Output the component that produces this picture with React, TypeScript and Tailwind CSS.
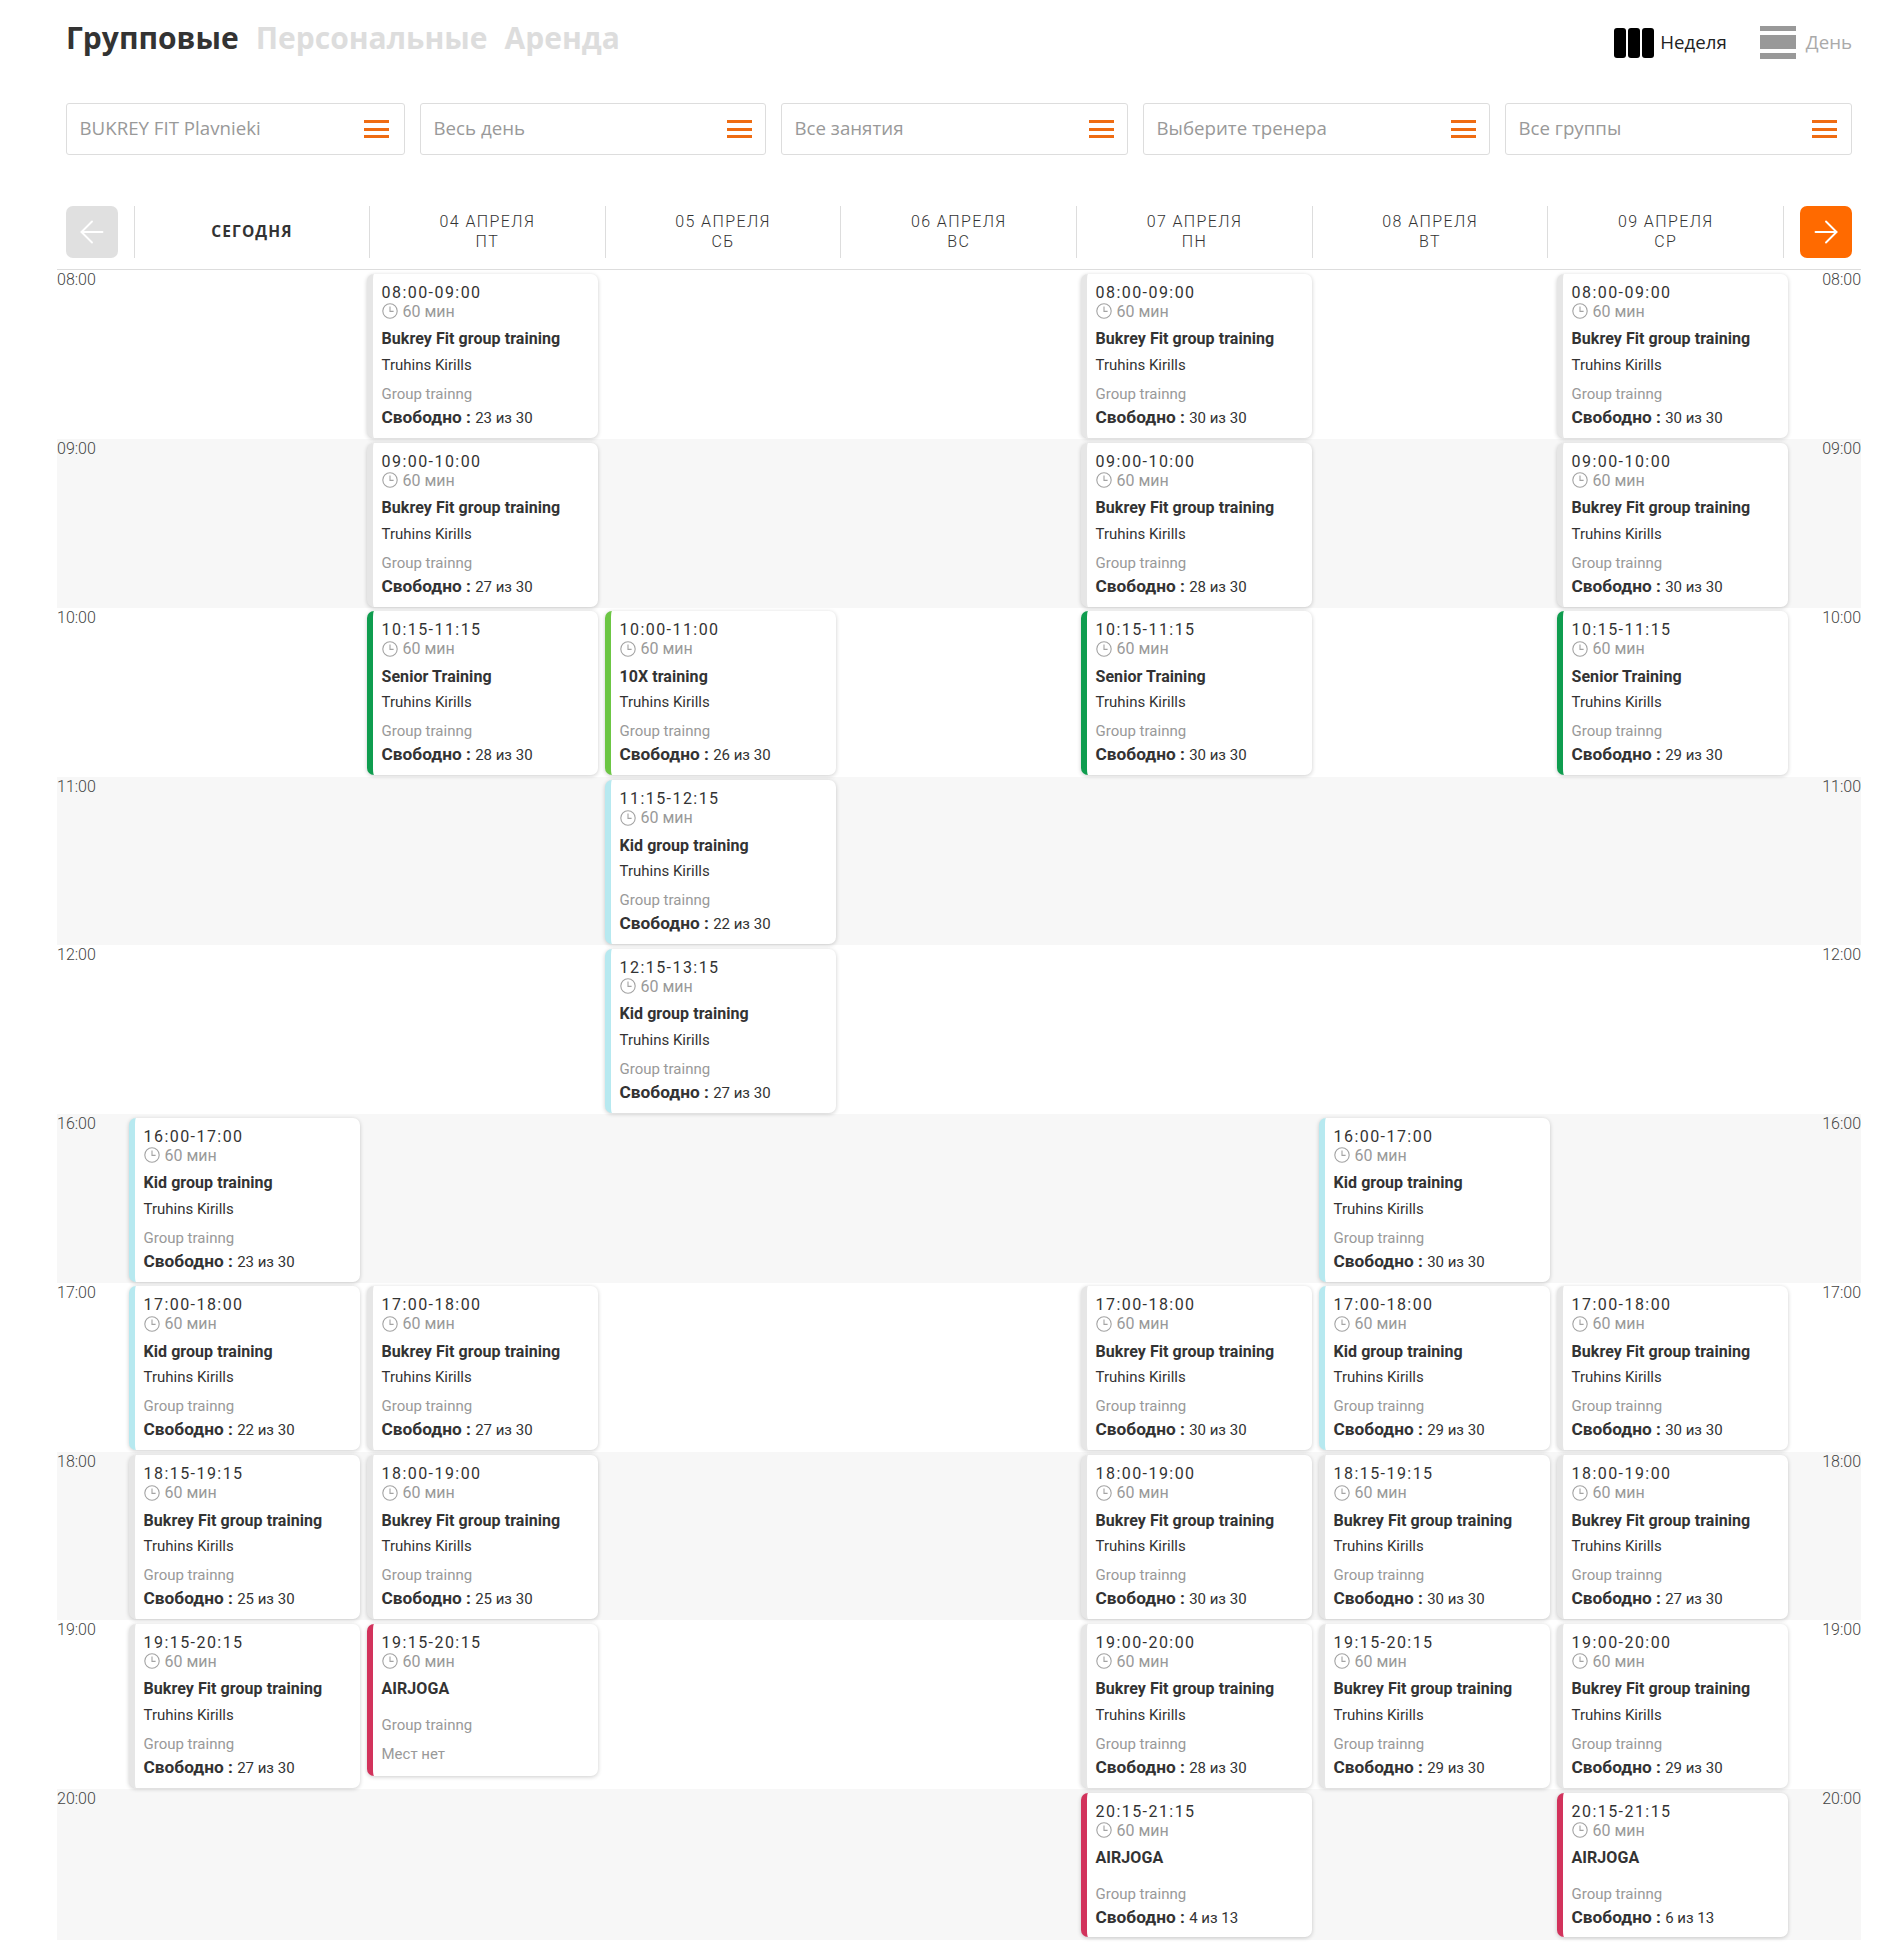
import { ArrowLeft, ArrowRight } from 'lucide-react';

type Session = {
  col: number;
  time: string;
  title: string;
  bar: string;
  free?: string;
  noTrainer?: boolean;
  tight?: boolean;
};

const BUKREY = 'Bukrey Fit group training';
const KID = 'Kid group training';
const SENIOR = 'Senior Training';
const GRAY = 'border-l-[#e6e6e6]';
const GREEN = 'border-l-[#0f9d4f]';
const LIME = 'border-l-[#6cc644]';
const CYAN = 'border-l-[#b7e9f0]';
const RED = 'border-l-[#d2335c]';

const rows: { label: string; sessions: Session[]; last?: boolean }[] = [
  {
    label: '08:00',
    sessions: [
      { col: 1, time: '08:00-09:00', title: BUKREY, bar: GRAY, free: '23 из 30' },
      { col: 4, time: '08:00-09:00', title: BUKREY, bar: GRAY, free: '30 из 30' },
      { col: 6, time: '08:00-09:00', title: BUKREY, bar: GRAY, free: '30 из 30' },
    ],
  },
  {
    label: '09:00',
    sessions: [
      { col: 1, time: '09:00-10:00', title: BUKREY, bar: GRAY, free: '27 из 30' },
      { col: 4, time: '09:00-10:00', title: BUKREY, bar: GRAY, free: '28 из 30' },
      { col: 6, time: '09:00-10:00', title: BUKREY, bar: GRAY, free: '30 из 30' },
    ],
  },
  {
    label: '10:00',
    sessions: [
      { col: 1, time: '10:15-11:15', title: SENIOR, bar: GREEN, free: '28 из 30' },
      { col: 2, time: '10:00-11:00', title: '10X training', bar: LIME, free: '26 из 30' },
      { col: 4, time: '10:15-11:15', title: SENIOR, bar: GREEN, free: '30 из 30' },
      { col: 6, time: '10:15-11:15', title: SENIOR, bar: GREEN, free: '29 из 30' },
    ],
  },
  {
    label: '11:00',
    sessions: [{ col: 2, time: '11:15-12:15', title: KID, bar: CYAN, free: '22 из 30' }],
  },
  {
    label: '12:00',
    sessions: [{ col: 2, time: '12:15-13:15', title: KID, bar: CYAN, free: '27 из 30' }],
  },
  {
    label: '16:00',
    sessions: [
      { col: 0, time: '16:00-17:00', title: KID, bar: CYAN, free: '23 из 30' },
      { col: 5, time: '16:00-17:00', title: KID, bar: CYAN, free: '30 из 30' },
    ],
  },
  {
    label: '17:00',
    sessions: [
      { col: 0, time: '17:00-18:00', title: KID, bar: CYAN, free: '22 из 30' },
      { col: 1, time: '17:00-18:00', title: BUKREY, bar: GRAY, free: '27 из 30' },
      { col: 4, time: '17:00-18:00', title: BUKREY, bar: GRAY, free: '30 из 30' },
      { col: 5, time: '17:00-18:00', title: KID, bar: CYAN, free: '29 из 30' },
      { col: 6, time: '17:00-18:00', title: BUKREY, bar: GRAY, free: '30 из 30' },
    ],
  },
  {
    label: '18:00',
    sessions: [
      { col: 0, time: '18:15-19:15', title: BUKREY, bar: GRAY, free: '25 из 30' },
      { col: 1, time: '18:00-19:00', title: BUKREY, bar: GRAY, free: '25 из 30' },
      { col: 4, time: '18:00-19:00', title: BUKREY, bar: GRAY, free: '30 из 30' },
      { col: 5, time: '18:15-19:15', title: BUKREY, bar: GRAY, free: '30 из 30' },
      { col: 6, time: '18:00-19:00', title: BUKREY, bar: GRAY, free: '27 из 30' },
    ],
  },
  {
    label: '19:00',
    sessions: [
      { col: 0, time: '19:15-20:15', title: BUKREY, bar: GRAY, free: '27 из 30' },
      { col: 1, time: '19:15-20:15', title: 'AIRJOGA', bar: RED, noTrainer: true },
      { col: 4, time: '19:00-20:00', title: BUKREY, bar: GRAY, free: '28 из 30' },
      { col: 5, time: '19:15-20:15', title: BUKREY, bar: GRAY, free: '29 из 30' },
      { col: 6, time: '19:00-20:00', title: BUKREY, bar: GRAY, free: '29 из 30' },
    ],
  },
  {
    label: '20:00',
    last: true,
    sessions: [
      { col: 4, time: '20:15-21:15', title: 'AIRJOGA', bar: RED, free: '4 из 13', noTrainer: true, tight: true },
      { col: 6, time: '20:15-21:15', title: 'AIRJOGA', bar: RED, free: '6 из 13', noTrainer: true, tight: true },
    ],
  },
];

const days = [
  ['04 АПРЕЛЯ', 'ПТ'],
  ['05 АПРЕЛЯ', 'СБ'],
  ['06 АПРЕЛЯ', 'ВС'],
  ['07 АПРЕЛЯ', 'ПН'],
  ['08 АПРЕЛЯ', 'ВТ'],
  ['09 АПРЕЛЯ', 'СР'],
];

const filters = [
  { label: 'BUKREY FIT Plavnieki', box: 'w-[339px] pr-[15px]' },
  { label: 'Весь день', box: 'w-[346px] pr-[13px]' },
  { label: 'Все занятия', box: 'w-[347px] pr-[13px]' },
  { label: 'Выберите тренера', box: 'w-[347px] pr-[13px]' },
  { label: 'Все группы', box: 'w-[347px] pr-[14px]' },
];

function ClockIcon() {
  return (
    <svg viewBox="0 0 16 16" className="h-4 w-4 shrink-0" fill="none" stroke="#a3a3a3" strokeWidth="1.1">
      <circle cx="8" cy="8" r="7.2" />
      <path d="M8 3.6V8.4H11.6" />
    </svg>
  );
}

function Card({ session }: { session: Session }) {
  const height = session.tight ? 'h-[144px]' : session.noTrainer ? 'h-[152px]' : 'h-[164px]';

  return (
    <div
      className={`${height} w-[231px] rounded-[7px] border-l-[6px] ${session.bar} bg-white pl-[8.5px] pt-[9px] shadow-[0_1px_4px_rgba(0,0,0,0.2)]`}
    >
      <div className="h-[19px] text-[16px] leading-[20px] tracking-[1.45px] text-[#333]">{session.time}</div>
      <div className="flex h-[19px] items-center gap-[5px] text-[16px] leading-[19px] text-[#999]">
        <ClockIcon />
        <span>60 мин</span>
      </div>
      <div className="mt-[7.5px] h-[22px] text-[16px] font-bold leading-[22px] tracking-[0.06px] text-[#333]">
        {session.title}
      </div>
      {!session.noTrainer && (
        <div className="mt-[3.5px] h-[22px] text-[15px] leading-[22px] text-[#333]">Truhins Kirills</div>
      )}
      <div
        className={`${session.tight ? 'mt-[13.5px]' : session.noTrainer ? 'mt-[13.5px]' : 'mt-[7px]'} h-[22px] text-[15px] leading-[22px] text-[#999]`}
      >
        Group trainng
      </div>
      {session.free ? (
        <div className="h-[24px] text-[15px] leading-[24px] text-[#333]">
          <span className="text-[17.3px] font-bold">Свободно : </span>
          {session.free}
        </div>
      ) : (
        <div className="mt-[7px] h-[22px] text-[15px] leading-[22px] text-[#999]">Мест нет</div>
      )}
    </div>
  );
}

export default function App() {
  return (
    <div className="h-[1953px] bg-white font-['Roboto',sans-serif]">
      <div className="flex h-[103px] items-start justify-between pl-[66px] pr-[47px] pt-[18px]">
        <div className="flex gap-[17px] font-['Open_Sans',sans-serif] text-[30px] font-bold leading-[40px] text-[#ddd]">
          <span className="text-[#333]">Групповые</span>
          <span>Персональные</span>
          <span>Аренда</span>
        </div>
        <div className="flex items-center pt-[8px] font-['Open_Sans',sans-serif] text-[18.7px]">
          <div className="flex h-[30px] gap-[2px]">
            <div className="w-[12px] rounded-[3px] bg-black" />
            <div className="w-[12px] rounded-[3px] bg-black" />
            <div className="w-[12px] rounded-[3px] bg-black" />
          </div>
          <span className="ml-[6px] text-[#222]">Неделя</span>
          <div className="ml-[33px] flex h-[33px] w-[36px] flex-col gap-[4px]">
            <div className="h-[5px] bg-[#999]" />
            <div className="h-[14px] bg-[#999]" />
            <div className="h-[6px] bg-[#999]" />
          </div>
          <span className="ml-[10px] text-[#aaa]">День</span>
        </div>
      </div>

      <div className="flex h-[52px] gap-[15px] pl-[66px]">
        {filters.map((filter) => (
          <div
            key={filter.label}
            className={`${filter.box} flex items-center justify-between rounded-[3px] border border-[#ddd] pl-[12.5px] font-['Open_Sans',sans-serif] text-[18.7px] text-[#999]`}
          >
            <span className="-mt-[2px]">{filter.label}</span>
            <div className="flex w-[25px] flex-col gap-[4.5px]">
              <div className="h-[3px] bg-[#ef6c12]" />
              <div className="h-[3px] bg-[#ef6c12]" />
              <div className="h-[3px] bg-[#ef6c12]" />
            </div>
          </div>
        ))}
      </div>

      <div className="mt-[51px] flex h-[52px] pl-[66px]">
        <div className="flex h-[52px] w-[52px] items-center justify-center rounded-[7px] bg-[#e0e0e0]">
          <ArrowLeft className="h-9 w-9 text-white" strokeWidth={1.25} />
        </div>
        <div className="ml-[16px] flex h-[52px] w-[236px] items-center justify-center border-x border-[#ddd] pb-[1px] font-['Open_Sans',sans-serif] text-[15.5px] font-bold tracking-[1.1px] text-[#333]">
          СЕГОДНЯ
        </div>
        {days.map(([date, day]) => (
          <div
            key={date}
            className="flex h-[52px] w-[235.7px] flex-col items-center justify-center border-r border-[#ddd] text-[16px] font-light leading-[20px] tracking-[1.4px] text-[#333]"
          >
            <span>{date}</span>
            <span>{day}</span>
          </div>
        ))}
        <div className="ml-[16px] flex h-[52px] w-[52px] items-center justify-center rounded-[7px] bg-[#ff6a00]">
          <ArrowRight className="h-9 w-9 text-white" strokeWidth={1.25} />
        </div>
      </div>

      <div className="ml-[57px] mt-[11.25px] w-[1804px] border-t border-[#ddd]">
        {rows.map((row, index) => (
          <div
            key={row.label}
            className={`grid grid-cols-[72px_repeat(7,238px)_66px] ${row.last ? 'h-[151px]' : 'h-[168.75px]'} ${index % 2 === 1 ? 'bg-[#f7f7f7]' : ''}`}
          >
            <div className="text-[16px] font-light leading-[20px] text-[#444]">{row.label}</div>
            {[0, 1, 2, 3, 4, 5, 6].map((col) => {
              const session = row.sessions.find((item) => item.col === col);
              return <div key={col} className="pt-[3.5px]">{session && <Card session={session} />}</div>;
            })}
            <div className="text-right text-[16px] font-light leading-[20px] text-[#444]">{row.label}</div>
          </div>
        ))}
      </div>
    </div>
  );
}
